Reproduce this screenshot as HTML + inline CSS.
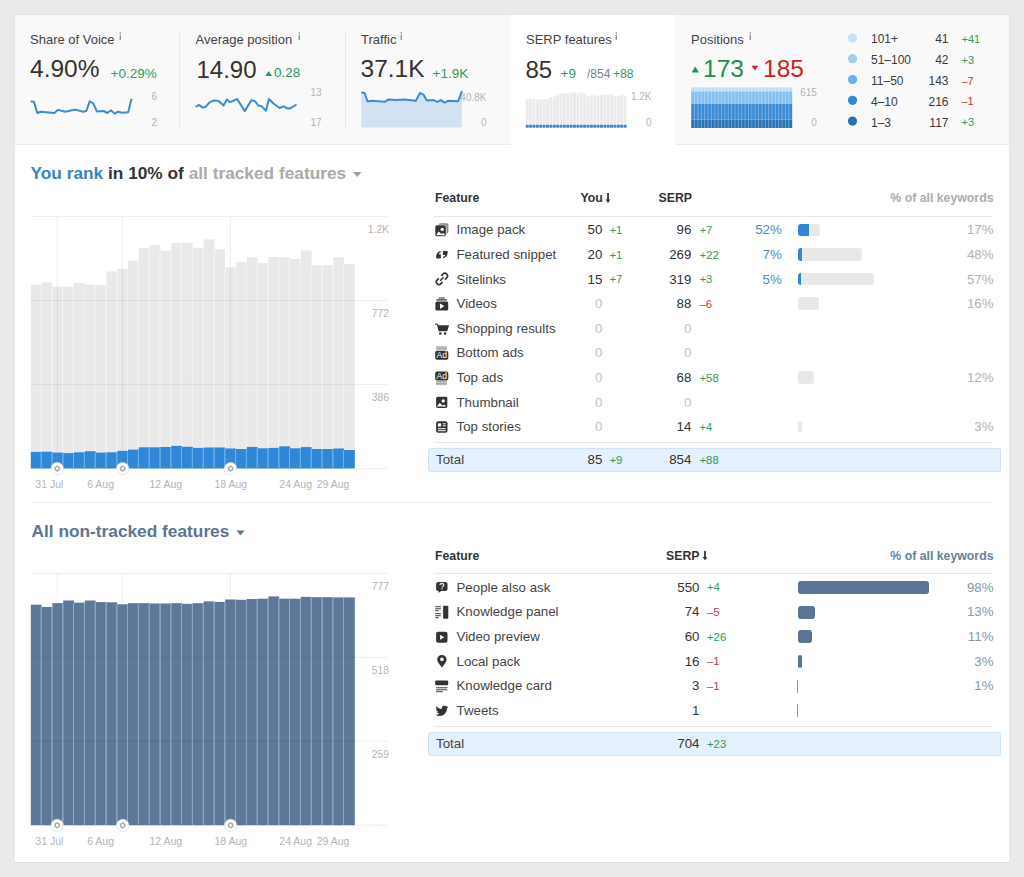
<!DOCTYPE html>
<html><head><meta charset="utf-8"><style>
html,body{margin:0;padding:0;}
body{width:1024px;height:877px;background:#e9eaec;position:relative;overflow:hidden;font-family:"Liberation Sans", sans-serif;}
.t{position:absolute;white-space:nowrap;line-height:1;font-family:"Liberation Sans", sans-serif;}
svg{overflow:visible}
</style></head><body>
<div style="position:absolute;left:15.00px;top:15.00px;width:994.00px;height:130.00px;background:#f9f9f9;box-shadow:0 0 0 1px #e4e5e7;"></div>
<div style="position:absolute;left:511.00px;top:15.00px;width:164.00px;height:131.00px;background:#ffffff;"></div>
<div style="position:absolute;left:15.00px;top:144.00px;width:496.00px;height:1.00px;background:#ececec;"></div>
<div style="position:absolute;left:675.00px;top:144.00px;width:334.00px;height:1.00px;background:#ececec;"></div>
<div style="position:absolute;left:179.00px;top:31.00px;width:1.00px;height:98.00px;background:#e9e9e9;"></div>
<div style="position:absolute;left:345.00px;top:31.00px;width:1.00px;height:98.00px;background:#e9e9e9;"></div>
<div class="t" style="left:30.00px;top:33.00px;font-size:13px;color:#444;font-weight:400;">Share of Voice</div>
<svg style="position:absolute;left:119.30px;top:32.00px" width="3" height="9" viewBox="0 0 3 9"><circle cx="1.3" cy="1" r="0.85" fill="#8a8a8a"/><rect x="0.6" y="2.8" width="1.35" height="5.1" fill="#8a8a8a"/></svg>
<div class="t" style="left:30.00px;top:57.26px;font-size:24.5px;color:#333;font-weight:400;">4.90%</div>
<div class="t" style="left:110.50px;top:66.57px;font-size:13.5px;color:#2f9a5c;font-weight:400;">+0.29%</div>
<svg style="position:absolute;left:25px;top:90px" width="115" height="30" viewBox="25 90 115 30"><polyline fill="none" stroke="#3f8bd0" stroke-width="2" stroke-linejoin="round" points="30.7,101.4 33.9,101.7 37.3,113 40.7,111.7 54.4,113 57.8,109.9 65.3,111.7 75.6,109.6 83.1,111.7 86.3,111 89.7,101.4 93.4,103.5 96.8,111.4 103.6,111 107.4,113 110.9,110.3 114.6,113.7 118,111.7 122.1,112.8 128.2,112.3 131.6,98.7"/></svg>
<div class="t" style="right:867.00px;top:92.48px;font-size:10px;color:#b4b4b4;font-weight:400;">6</div>
<div class="t" style="right:867.00px;top:117.58px;font-size:10px;color:#b4b4b4;font-weight:400;">2</div>
<div class="t" style="left:195.50px;top:33.00px;font-size:13px;color:#444;font-weight:400;">Average position</div>
<svg style="position:absolute;left:298.00px;top:32.00px" width="3" height="9" viewBox="0 0 3 9"><circle cx="1.3" cy="1" r="0.85" fill="#8a8a8a"/><rect x="0.6" y="2.8" width="1.35" height="5.1" fill="#8a8a8a"/></svg>
<div class="t" style="left:196.50px;top:57.68px;font-size:24px;color:#333;font-weight:400;">14.90</div>
<svg style="position:absolute;left:260px;top:60px" width="20" height="20" viewBox="260 60 20 20"><polygon fill="#2f9a5c" points="265.3,75.9 272.1,75.9 268.7,71"/></svg>
<div class="t" style="left:274.00px;top:66.17px;font-size:13.5px;color:#2f9a5c;font-weight:400;">0.28</div>
<svg style="position:absolute;left:190px;top:90px" width="115" height="30" viewBox="190 90 115 30"><polyline fill="none" stroke="#3f8bd0" stroke-width="2" stroke-linejoin="round" points="195.7,107 198.9,104.9 203,107.6 205.7,106.7 209.8,102.2 213.9,100.5 218.7,101.1 223.5,105.6 226.9,99.4 230.3,102.2 237.2,99 244.7,111.1 251.5,100.1 254.9,101.2 258.4,105.6 261.8,106.3 265.9,110.8 269,99 273.4,103.5 279.6,108 283.7,106.3 287.1,108.3 289.8,108.6 296.6,104.5"/></svg>
<div class="t" style="right:702.50px;top:88.18px;font-size:10px;color:#b4b4b4;font-weight:400;">13</div>
<div class="t" style="right:702.50px;top:117.88px;font-size:10px;color:#b4b4b4;font-weight:400;">17</div>
<div class="t" style="left:361.00px;top:33.00px;font-size:13px;color:#444;font-weight:400;">Traffic</div>
<svg style="position:absolute;left:400.00px;top:32.00px" width="3" height="9" viewBox="0 0 3 9"><circle cx="1.3" cy="1" r="0.85" fill="#8a8a8a"/><rect x="0.6" y="2.8" width="1.35" height="5.1" fill="#8a8a8a"/></svg>
<div class="t" style="left:360.50px;top:57.26px;font-size:24.5px;color:#333;font-weight:400;">37.1K</div>
<div class="t" style="left:432.50px;top:66.57px;font-size:13.5px;color:#2f9a5c;font-weight:400;">+1.9K</div>
<svg style="position:absolute;left:355px;top:85px" width="115" height="45" viewBox="355 85 115 45"><polygon fill="#d3e2f3" points="361.2,127.5 361.2,92.6 364.6,93 367.6,101.5 371.4,100.8 385.1,101.8 388.5,99.4 395.3,100.1 404.2,99.4 415.8,100.8 420,93 423.4,94.6 426.8,100.4 433.6,100.1 437.4,101.8 440.9,100.1 444.6,102.6 448,100.8 458.2,101.2 461.9,91.2 461.9,127.5"/><polyline fill="none" stroke="#3f8bd0" stroke-width="2" stroke-linejoin="round" points="361.2,92.6 364.6,93 367.6,101.5 371.4,100.8 385.1,101.8 388.5,99.4 395.3,100.1 404.2,99.4 415.8,100.8 420,93 423.4,94.6 426.8,100.4 433.6,100.1 437.4,101.8 440.9,100.1 444.6,102.6 448,100.8 458.2,101.2 461.9,91.2"/></svg>
<div class="t" style="right:537.50px;top:92.58px;font-size:10px;color:#b4b4b4;font-weight:400;">40.8K</div>
<div class="t" style="right:537.50px;top:117.88px;font-size:10px;color:#b4b4b4;font-weight:400;">0</div>
<div class="t" style="left:526.00px;top:33.00px;font-size:13px;color:#444;font-weight:400;">SERP features</div>
<svg style="position:absolute;left:615.00px;top:32.00px" width="3" height="9" viewBox="0 0 3 9"><circle cx="1.3" cy="1" r="0.85" fill="#8a8a8a"/><rect x="0.6" y="2.8" width="1.35" height="5.1" fill="#8a8a8a"/></svg>
<div class="t" style="left:525.50px;top:57.68px;font-size:24px;color:#333;font-weight:400;">85</div>
<div class="t" style="left:560.50px;top:66.57px;font-size:13.5px;color:#2f9a5c;font-weight:400;">+9</div>
<div class="t" style="left:587.00px;top:67.84px;font-size:12px;color:#808080;font-weight:400;">/854</div>
<div class="t" style="left:613.00px;top:67.84px;font-size:12px;color:#2f9a5c;font-weight:400;">+88</div>
<svg style="position:absolute;left:520px;top:85px" width="115" height="45" viewBox="520 85 115 45"><rect x="525.80" y="99.00" width="2.92" height="25.80" fill="#ebebeb"/><rect x="525.80" y="124.8" width="2.92" height="2.9" fill="#3d82c8"/><rect x="529.17" y="98.67" width="2.92" height="26.13" fill="#ebebeb"/><rect x="529.17" y="124.8" width="2.92" height="2.9" fill="#3d82c8"/><rect x="532.55" y="99.32" width="2.92" height="25.48" fill="#ebebeb"/><rect x="532.55" y="124.8" width="2.92" height="2.9" fill="#3d82c8"/><rect x="535.92" y="99.32" width="2.92" height="25.48" fill="#ebebeb"/><rect x="535.92" y="124.8" width="2.92" height="2.9" fill="#3d82c8"/><rect x="539.29" y="98.75" width="2.92" height="26.05" fill="#ebebeb"/><rect x="539.29" y="124.8" width="2.92" height="2.9" fill="#3d82c8"/><rect x="542.67" y="99.00" width="2.92" height="25.80" fill="#ebebeb"/><rect x="542.67" y="124.8" width="2.92" height="2.9" fill="#3d82c8"/><rect x="546.04" y="99.06" width="2.92" height="25.74" fill="#ebebeb"/><rect x="546.04" y="124.8" width="2.92" height="2.9" fill="#3d82c8"/><rect x="549.41" y="96.97" width="2.92" height="27.83" fill="#ebebeb"/><rect x="549.41" y="124.8" width="2.92" height="2.9" fill="#3d82c8"/><rect x="552.79" y="96.58" width="2.92" height="28.22" fill="#ebebeb"/><rect x="552.79" y="124.8" width="2.92" height="2.9" fill="#3d82c8"/><rect x="556.16" y="95.31" width="2.92" height="29.49" fill="#ebebeb"/><rect x="556.16" y="124.8" width="2.92" height="2.9" fill="#3d82c8"/><rect x="559.53" y="93.34" width="2.92" height="31.46" fill="#ebebeb"/><rect x="559.53" y="124.8" width="2.92" height="2.9" fill="#3d82c8"/><rect x="562.91" y="92.89" width="2.92" height="31.91" fill="#ebebeb"/><rect x="562.91" y="124.8" width="2.92" height="2.9" fill="#3d82c8"/><rect x="566.28" y="93.77" width="2.92" height="31.03" fill="#ebebeb"/><rect x="566.28" y="124.8" width="2.92" height="2.9" fill="#3d82c8"/><rect x="569.65" y="92.56" width="2.92" height="32.24" fill="#ebebeb"/><rect x="569.65" y="124.8" width="2.92" height="2.9" fill="#3d82c8"/><rect x="573.03" y="92.50" width="2.92" height="32.30" fill="#ebebeb"/><rect x="573.03" y="124.8" width="2.92" height="2.9" fill="#3d82c8"/><rect x="576.40" y="93.28" width="2.92" height="31.52" fill="#ebebeb"/><rect x="576.40" y="124.8" width="2.92" height="2.9" fill="#3d82c8"/><rect x="579.77" y="91.99" width="2.92" height="32.81" fill="#ebebeb"/><rect x="579.77" y="124.8" width="2.92" height="2.9" fill="#3d82c8"/><rect x="583.15" y="93.52" width="2.92" height="31.28" fill="#ebebeb"/><rect x="583.15" y="124.8" width="2.92" height="2.9" fill="#3d82c8"/><rect x="586.52" y="96.33" width="2.92" height="28.47" fill="#ebebeb"/><rect x="586.52" y="124.8" width="2.92" height="2.9" fill="#3d82c8"/><rect x="589.89" y="95.49" width="2.92" height="29.31" fill="#ebebeb"/><rect x="589.89" y="124.8" width="2.92" height="2.9" fill="#3d82c8"/><rect x="593.27" y="94.80" width="2.92" height="30.00" fill="#ebebeb"/><rect x="593.27" y="124.8" width="2.92" height="2.9" fill="#3d82c8"/><rect x="596.64" y="95.69" width="2.92" height="29.11" fill="#ebebeb"/><rect x="596.64" y="124.8" width="2.92" height="2.9" fill="#3d82c8"/><rect x="600.01" y="94.73" width="2.92" height="30.07" fill="#ebebeb"/><rect x="600.01" y="124.8" width="2.92" height="2.9" fill="#3d82c8"/><rect x="603.39" y="94.80" width="2.92" height="30.00" fill="#ebebeb"/><rect x="603.39" y="124.8" width="2.92" height="2.9" fill="#3d82c8"/><rect x="606.76" y="95.04" width="2.92" height="29.76" fill="#ebebeb"/><rect x="606.76" y="124.8" width="2.92" height="2.9" fill="#3d82c8"/><rect x="610.13" y="93.71" width="2.92" height="31.09" fill="#ebebeb"/><rect x="610.13" y="124.8" width="2.92" height="2.9" fill="#3d82c8"/><rect x="613.51" y="96.00" width="2.92" height="28.80" fill="#ebebeb"/><rect x="613.51" y="124.8" width="2.92" height="2.9" fill="#3d82c8"/><rect x="616.88" y="96.00" width="2.92" height="28.80" fill="#ebebeb"/><rect x="616.88" y="124.8" width="2.92" height="2.9" fill="#3d82c8"/><rect x="620.25" y="94.80" width="2.92" height="30.00" fill="#ebebeb"/><rect x="620.25" y="124.8" width="2.92" height="2.9" fill="#3d82c8"/><rect x="623.63" y="95.82" width="2.92" height="28.98" fill="#ebebeb"/><rect x="623.63" y="124.8" width="2.92" height="2.9" fill="#3d82c8"/></svg>
<div class="t" style="right:372.50px;top:92.48px;font-size:10px;color:#b4b4b4;font-weight:400;">1.2K</div>
<div class="t" style="right:372.50px;top:117.88px;font-size:10px;color:#b4b4b4;font-weight:400;">0</div>
<div class="t" style="left:691.00px;top:33.00px;font-size:13px;color:#444;font-weight:400;">Positions</div>
<svg style="position:absolute;left:749.00px;top:32.00px" width="3" height="9" viewBox="0 0 3 9"><circle cx="1.3" cy="1" r="0.85" fill="#8a8a8a"/><rect x="0.6" y="2.8" width="1.35" height="5.1" fill="#8a8a8a"/></svg>
<svg style="position:absolute;left:685px;top:60px" width="80" height="20" viewBox="685 60 80 20"><polygon fill="#1f9450" points="691.6,72.6 698.9,72.6 695.25,66.5"/><polygon fill="#d0211c" points="751.6,65.7 758.2,65.7 754.9,70.6"/></svg>
<div class="t" style="left:703.00px;top:57.06px;font-size:24.5px;color:#1c8e4b;font-weight:400;">173</div>
<div class="t" style="left:763.00px;top:57.06px;font-size:24.5px;color:#cc1f1f;font-weight:400;">185</div>
<svg style="position:absolute;left:685px;top:80px" width="115" height="55" viewBox="685 80 115 55"><rect x="691.2" y="87.4" width="101" height="4" fill="#bfdef5"/><rect x="691.2" y="91.4" width="101" height="12.3" fill="#84c0ee"/><rect x="691.2" y="103.7" width="101" height="15.9" fill="#3b8ad6"/><rect x="691.2" y="119.6" width="101" height="8.4" fill="#2c75b3"/><rect x="694.12" y="87.4" width="0.9" height="40.6" fill="#fff" opacity="0.35"/><rect x="697.48" y="87.4" width="0.9" height="40.6" fill="#fff" opacity="0.35"/><rect x="700.85" y="87.4" width="0.9" height="40.6" fill="#fff" opacity="0.35"/><rect x="704.22" y="87.4" width="0.9" height="40.6" fill="#fff" opacity="0.35"/><rect x="707.58" y="87.4" width="0.9" height="40.6" fill="#fff" opacity="0.35"/><rect x="710.95" y="87.4" width="0.9" height="40.6" fill="#fff" opacity="0.35"/><rect x="714.32" y="87.4" width="0.9" height="40.6" fill="#fff" opacity="0.35"/><rect x="717.68" y="87.4" width="0.9" height="40.6" fill="#fff" opacity="0.35"/><rect x="721.05" y="87.4" width="0.9" height="40.6" fill="#fff" opacity="0.35"/><rect x="724.42" y="87.4" width="0.9" height="40.6" fill="#fff" opacity="0.35"/><rect x="727.78" y="87.4" width="0.9" height="40.6" fill="#fff" opacity="0.35"/><rect x="731.15" y="87.4" width="0.9" height="40.6" fill="#fff" opacity="0.35"/><rect x="734.52" y="87.4" width="0.9" height="40.6" fill="#fff" opacity="0.35"/><rect x="737.88" y="87.4" width="0.9" height="40.6" fill="#fff" opacity="0.35"/><rect x="741.25" y="87.4" width="0.9" height="40.6" fill="#fff" opacity="0.35"/><rect x="744.62" y="87.4" width="0.9" height="40.6" fill="#fff" opacity="0.35"/><rect x="747.98" y="87.4" width="0.9" height="40.6" fill="#fff" opacity="0.35"/><rect x="751.35" y="87.4" width="0.9" height="40.6" fill="#fff" opacity="0.35"/><rect x="754.72" y="87.4" width="0.9" height="40.6" fill="#fff" opacity="0.35"/><rect x="758.08" y="87.4" width="0.9" height="40.6" fill="#fff" opacity="0.35"/><rect x="761.45" y="87.4" width="0.9" height="40.6" fill="#fff" opacity="0.35"/><rect x="764.82" y="87.4" width="0.9" height="40.6" fill="#fff" opacity="0.35"/><rect x="768.18" y="87.4" width="0.9" height="40.6" fill="#fff" opacity="0.35"/><rect x="771.55" y="87.4" width="0.9" height="40.6" fill="#fff" opacity="0.35"/><rect x="774.92" y="87.4" width="0.9" height="40.6" fill="#fff" opacity="0.35"/><rect x="778.28" y="87.4" width="0.9" height="40.6" fill="#fff" opacity="0.35"/><rect x="781.65" y="87.4" width="0.9" height="40.6" fill="#fff" opacity="0.35"/><rect x="785.02" y="87.4" width="0.9" height="40.6" fill="#fff" opacity="0.35"/><rect x="788.38" y="87.4" width="0.9" height="40.6" fill="#fff" opacity="0.35"/></svg>
<div class="t" style="right:207.20px;top:87.88px;font-size:10px;color:#b4b4b4;font-weight:400;">615</div>
<div class="t" style="right:207.20px;top:117.98px;font-size:10px;color:#b4b4b4;font-weight:400;">0</div>
<div class="t" style="left:871.00px;top:33.42px;font-size:12px;color:#3a3a3a;font-weight:400;">101+</div>
<div class="t" style="right:75.50px;top:33.42px;font-size:12px;color:#3a3a3a;font-weight:400;">41</div>
<div class="t" style="left:961.50px;top:33.90px;font-size:11px;color:#2f9a5c;font-weight:400;">+41</div>
<div class="t" style="left:871.00px;top:54.22px;font-size:12px;color:#3a3a3a;font-weight:400;">51–100</div>
<div class="t" style="right:75.50px;top:54.22px;font-size:12px;color:#3a3a3a;font-weight:400;">42</div>
<div class="t" style="left:961.50px;top:54.70px;font-size:11px;color:#2f9a5c;font-weight:400;">+3</div>
<div class="t" style="left:871.00px;top:75.02px;font-size:12px;color:#3a3a3a;font-weight:400;">11–50</div>
<div class="t" style="right:75.50px;top:75.02px;font-size:12px;color:#3a3a3a;font-weight:400;">143</div>
<div class="t" style="left:961.50px;top:75.50px;font-size:11px;color:#c23b36;font-weight:400;">–7</div>
<div class="t" style="left:871.00px;top:95.82px;font-size:12px;color:#3a3a3a;font-weight:400;">4–10</div>
<div class="t" style="right:75.50px;top:95.82px;font-size:12px;color:#3a3a3a;font-weight:400;">216</div>
<div class="t" style="left:961.50px;top:96.30px;font-size:11px;color:#c23b36;font-weight:400;">–1</div>
<div class="t" style="left:871.00px;top:116.62px;font-size:12px;color:#3a3a3a;font-weight:400;">1–3</div>
<div class="t" style="right:75.50px;top:116.62px;font-size:12px;color:#3a3a3a;font-weight:400;">117</div>
<div class="t" style="left:961.50px;top:117.10px;font-size:11px;color:#2f9a5c;font-weight:400;">+3</div>
<svg style="position:absolute;left:840px;top:25px" width="30" height="110" viewBox="840 25 30 110"><circle cx="852.5" cy="37.90" r="4.6" fill="#c6e1f6"/><circle cx="852.5" cy="58.70" r="4.6" fill="#a0cdf0"/><circle cx="852.5" cy="79.50" r="4.6" fill="#6aafe8"/><circle cx="852.5" cy="100.30" r="4.6" fill="#3386d8"/><circle cx="852.5" cy="121.10" r="4.6" fill="#2b6fac"/></svg>
<div style="position:absolute;left:15.00px;top:145.00px;width:994.00px;height:717.00px;background:#ffffff;box-shadow:0 1px 0 0 #dcdddf, 1px 0 0 0 #e6e7e9, -1px 0 0 0 #e6e7e9;"></div>
<div style="position:absolute;left:511.00px;top:144.00px;width:164.00px;height:2.00px;background:#ffffff;"></div>
<div class="t" style="left:30.5px;top:164.96px;font-size:17.3px;font-weight:700;color:#333"><span style="color:#3a82c6">You rank</span> in 10% of <span style="color:#aaa">all tracked features</span></div>
<svg style="position:absolute;left:345px;top:165px" width="20" height="20" viewBox="345 165 20 20"><polygon fill="#a0a0a0" points="353,172 361.5,172 357.25,177"/></svg>
<svg style="position:absolute;left:20px;top:211px" width="380" height="271" viewBox="20 211 380 271"><rect x="30.80" y="284.50" width="10.80" height="183.90" fill="#e9e9e9"/><rect x="41.60" y="282.40" width="10.80" height="186.00" fill="#e9e9e9"/><rect x="52.40" y="286.60" width="10.80" height="181.80" fill="#e9e9e9"/><rect x="63.20" y="286.60" width="10.80" height="181.80" fill="#e9e9e9"/><rect x="74.00" y="282.90" width="10.80" height="185.50" fill="#e9e9e9"/><rect x="84.80" y="284.50" width="10.80" height="183.90" fill="#e9e9e9"/><rect x="95.60" y="284.90" width="10.80" height="183.50" fill="#e9e9e9"/><rect x="106.40" y="271.40" width="10.80" height="197.00" fill="#e9e9e9"/><rect x="117.20" y="268.90" width="10.80" height="199.50" fill="#e9e9e9"/><rect x="128.00" y="260.70" width="10.80" height="207.70" fill="#e9e9e9"/><rect x="138.80" y="248.00" width="10.80" height="220.40" fill="#e9e9e9"/><rect x="149.60" y="245.10" width="10.80" height="223.30" fill="#e9e9e9"/><rect x="160.40" y="250.80" width="10.80" height="217.60" fill="#e9e9e9"/><rect x="171.20" y="243.00" width="10.80" height="225.40" fill="#e9e9e9"/><rect x="182.00" y="242.60" width="10.80" height="225.80" fill="#e9e9e9"/><rect x="192.80" y="247.60" width="10.80" height="220.80" fill="#e9e9e9"/><rect x="203.60" y="239.30" width="10.80" height="229.10" fill="#e9e9e9"/><rect x="214.40" y="249.20" width="10.80" height="219.20" fill="#e9e9e9"/><rect x="225.20" y="267.30" width="10.80" height="201.10" fill="#e9e9e9"/><rect x="236.00" y="261.90" width="10.80" height="206.50" fill="#e9e9e9"/><rect x="246.80" y="257.40" width="10.80" height="211.00" fill="#e9e9e9"/><rect x="257.60" y="263.20" width="10.80" height="205.20" fill="#e9e9e9"/><rect x="268.40" y="257.00" width="10.80" height="211.40" fill="#e9e9e9"/><rect x="279.20" y="257.40" width="10.80" height="211.00" fill="#e9e9e9"/><rect x="290.00" y="259.00" width="10.80" height="209.40" fill="#e9e9e9"/><rect x="300.80" y="250.40" width="10.80" height="218.00" fill="#e9e9e9"/><rect x="311.60" y="265.20" width="10.80" height="203.20" fill="#e9e9e9"/><rect x="322.40" y="265.20" width="10.80" height="203.20" fill="#e9e9e9"/><rect x="333.20" y="257.40" width="10.80" height="211.00" fill="#e9e9e9"/><rect x="344.00" y="264.00" width="10.80" height="204.40" fill="#e9e9e9"/><rect x="40.60" y="284.50" width="1" height="183.90" fill="#f3f3f3"/><rect x="51.40" y="286.60" width="1" height="181.80" fill="#f3f3f3"/><rect x="62.20" y="286.60" width="1" height="181.80" fill="#f3f3f3"/><rect x="73.00" y="286.60" width="1" height="181.80" fill="#f3f3f3"/><rect x="83.80" y="284.50" width="1" height="183.90" fill="#f3f3f3"/><rect x="94.60" y="284.90" width="1" height="183.50" fill="#f3f3f3"/><rect x="105.40" y="284.90" width="1" height="183.50" fill="#f3f3f3"/><rect x="116.20" y="271.40" width="1" height="197.00" fill="#f3f3f3"/><rect x="127.00" y="268.90" width="1" height="199.50" fill="#f3f3f3"/><rect x="137.80" y="260.70" width="1" height="207.70" fill="#f3f3f3"/><rect x="148.60" y="248.00" width="1" height="220.40" fill="#f3f3f3"/><rect x="159.40" y="250.80" width="1" height="217.60" fill="#f3f3f3"/><rect x="170.20" y="250.80" width="1" height="217.60" fill="#f3f3f3"/><rect x="181.00" y="243.00" width="1" height="225.40" fill="#f3f3f3"/><rect x="191.80" y="247.60" width="1" height="220.80" fill="#f3f3f3"/><rect x="202.60" y="247.60" width="1" height="220.80" fill="#f3f3f3"/><rect x="213.40" y="249.20" width="1" height="219.20" fill="#f3f3f3"/><rect x="224.20" y="267.30" width="1" height="201.10" fill="#f3f3f3"/><rect x="235.00" y="267.30" width="1" height="201.10" fill="#f3f3f3"/><rect x="245.80" y="261.90" width="1" height="206.50" fill="#f3f3f3"/><rect x="256.60" y="263.20" width="1" height="205.20" fill="#f3f3f3"/><rect x="267.40" y="263.20" width="1" height="205.20" fill="#f3f3f3"/><rect x="278.20" y="257.40" width="1" height="211.00" fill="#f3f3f3"/><rect x="289.00" y="259.00" width="1" height="209.40" fill="#f3f3f3"/><rect x="299.80" y="259.00" width="1" height="209.40" fill="#f3f3f3"/><rect x="310.60" y="265.20" width="1" height="203.20" fill="#f3f3f3"/><rect x="321.40" y="265.20" width="1" height="203.20" fill="#f3f3f3"/><rect x="332.20" y="265.20" width="1" height="203.20" fill="#f3f3f3"/><rect x="343.00" y="264.00" width="1" height="204.40" fill="#f3f3f3"/><rect x="56.80" y="216.40" width="1" height="252.00" fill="#000" opacity="0.07"/><rect x="122.10" y="216.40" width="1" height="252.00" fill="#000" opacity="0.07"/><rect x="230.10" y="216.40" width="1" height="252.00" fill="#000" opacity="0.07"/><rect x="30.80" y="451.90" width="10.80" height="16.50" fill="#3187d7"/><rect x="41.60" y="451.70" width="10.80" height="16.70" fill="#3187d7"/><rect x="52.40" y="452.60" width="10.80" height="15.80" fill="#3187d7"/><rect x="63.20" y="453.10" width="10.80" height="15.30" fill="#3187d7"/><rect x="74.00" y="452.30" width="10.80" height="16.10" fill="#3187d7"/><rect x="84.80" y="451.20" width="10.80" height="17.20" fill="#3187d7"/><rect x="95.60" y="452.60" width="10.80" height="15.80" fill="#3187d7"/><rect x="106.40" y="452.30" width="10.80" height="16.10" fill="#3187d7"/><rect x="117.20" y="450.90" width="10.80" height="17.50" fill="#3187d7"/><rect x="128.00" y="449.60" width="10.80" height="18.80" fill="#3187d7"/><rect x="138.80" y="447.30" width="10.80" height="21.10" fill="#3187d7"/><rect x="149.60" y="447.30" width="10.80" height="21.10" fill="#3187d7"/><rect x="160.40" y="447.00" width="10.80" height="21.40" fill="#3187d7"/><rect x="171.20" y="445.90" width="10.80" height="22.50" fill="#3187d7"/><rect x="182.00" y="446.80" width="10.80" height="21.60" fill="#3187d7"/><rect x="192.80" y="447.90" width="10.80" height="20.50" fill="#3187d7"/><rect x="203.60" y="447.50" width="10.80" height="20.90" fill="#3187d7"/><rect x="214.40" y="447.50" width="10.80" height="20.90" fill="#3187d7"/><rect x="225.20" y="448.50" width="10.80" height="19.90" fill="#3187d7"/><rect x="236.00" y="449.00" width="10.80" height="19.40" fill="#3187d7"/><rect x="246.80" y="446.90" width="10.80" height="21.50" fill="#3187d7"/><rect x="257.60" y="448.30" width="10.80" height="20.10" fill="#3187d7"/><rect x="268.40" y="447.90" width="10.80" height="20.50" fill="#3187d7"/><rect x="279.20" y="446.30" width="10.80" height="22.10" fill="#3187d7"/><rect x="290.00" y="448.30" width="10.80" height="20.10" fill="#3187d7"/><rect x="300.80" y="447.10" width="10.80" height="21.30" fill="#3187d7"/><rect x="311.60" y="449.00" width="10.80" height="19.40" fill="#3187d7"/><rect x="322.40" y="449.00" width="10.80" height="19.40" fill="#3187d7"/><rect x="333.20" y="448.50" width="10.80" height="19.90" fill="#3187d7"/><rect x="344.00" y="450.00" width="10.80" height="18.40" fill="#3187d7"/><rect x="40.60" y="451.90" width="1" height="16.50" fill="#6ab3ef"/><rect x="51.40" y="452.60" width="1" height="15.80" fill="#6ab3ef"/><rect x="62.20" y="453.10" width="1" height="15.30" fill="#6ab3ef"/><rect x="73.00" y="453.10" width="1" height="15.30" fill="#6ab3ef"/><rect x="83.80" y="452.30" width="1" height="16.10" fill="#6ab3ef"/><rect x="94.60" y="452.60" width="1" height="15.80" fill="#6ab3ef"/><rect x="105.40" y="452.60" width="1" height="15.80" fill="#6ab3ef"/><rect x="116.20" y="452.30" width="1" height="16.10" fill="#6ab3ef"/><rect x="127.00" y="450.90" width="1" height="17.50" fill="#6ab3ef"/><rect x="137.80" y="449.60" width="1" height="18.80" fill="#6ab3ef"/><rect x="148.60" y="447.30" width="1" height="21.10" fill="#6ab3ef"/><rect x="159.40" y="447.30" width="1" height="21.10" fill="#6ab3ef"/><rect x="170.20" y="447.00" width="1" height="21.40" fill="#6ab3ef"/><rect x="181.00" y="446.80" width="1" height="21.60" fill="#6ab3ef"/><rect x="191.80" y="447.90" width="1" height="20.50" fill="#6ab3ef"/><rect x="202.60" y="447.90" width="1" height="20.50" fill="#6ab3ef"/><rect x="213.40" y="447.50" width="1" height="20.90" fill="#6ab3ef"/><rect x="224.20" y="448.50" width="1" height="19.90" fill="#6ab3ef"/><rect x="235.00" y="449.00" width="1" height="19.40" fill="#6ab3ef"/><rect x="245.80" y="449.00" width="1" height="19.40" fill="#6ab3ef"/><rect x="256.60" y="448.30" width="1" height="20.10" fill="#6ab3ef"/><rect x="267.40" y="448.30" width="1" height="20.10" fill="#6ab3ef"/><rect x="278.20" y="447.90" width="1" height="20.50" fill="#6ab3ef"/><rect x="289.00" y="448.30" width="1" height="20.10" fill="#6ab3ef"/><rect x="299.80" y="448.30" width="1" height="20.10" fill="#6ab3ef"/><rect x="310.60" y="449.00" width="1" height="19.40" fill="#6ab3ef"/><rect x="321.40" y="449.00" width="1" height="19.40" fill="#6ab3ef"/><rect x="332.20" y="449.00" width="1" height="19.40" fill="#6ab3ef"/><rect x="343.00" y="450.00" width="1" height="18.40" fill="#6ab3ef"/><rect x="30.8" y="215.90" width="357.5" height="1" fill="#000" opacity="0.07"/><rect x="30.8" y="299.90" width="357.5" height="1" fill="#000" opacity="0.07"/><rect x="30.8" y="383.90" width="357.5" height="1" fill="#000" opacity="0.07"/><rect x="30.8" y="467.90" width="357.5" height="1" fill="#000" opacity="0.07"/><circle cx="57.2" cy="468.60" r="6.1" fill="#fff" stroke="#dedede" stroke-width="0.8"/><g transform="translate(57.2,468.60)"><circle r="2" fill="none" stroke="#a8a8a8" stroke-width="1.2"/><rect x="-0.65" y="-3.2" width="1.3" height="1.4" fill="#a8a8a8" transform="rotate(0)"/><rect x="-0.65" y="-3.2" width="1.3" height="1.4" fill="#a8a8a8" transform="rotate(60)"/><rect x="-0.65" y="-3.2" width="1.3" height="1.4" fill="#a8a8a8" transform="rotate(120)"/><rect x="-0.65" y="-3.2" width="1.3" height="1.4" fill="#a8a8a8" transform="rotate(180)"/><rect x="-0.65" y="-3.2" width="1.3" height="1.4" fill="#a8a8a8" transform="rotate(240)"/><rect x="-0.65" y="-3.2" width="1.3" height="1.4" fill="#a8a8a8" transform="rotate(300)"/></g><circle cx="122.7" cy="468.60" r="6.1" fill="#fff" stroke="#dedede" stroke-width="0.8"/><g transform="translate(122.7,468.60)"><circle r="2" fill="none" stroke="#a8a8a8" stroke-width="1.2"/><rect x="-0.65" y="-3.2" width="1.3" height="1.4" fill="#a8a8a8" transform="rotate(0)"/><rect x="-0.65" y="-3.2" width="1.3" height="1.4" fill="#a8a8a8" transform="rotate(60)"/><rect x="-0.65" y="-3.2" width="1.3" height="1.4" fill="#a8a8a8" transform="rotate(120)"/><rect x="-0.65" y="-3.2" width="1.3" height="1.4" fill="#a8a8a8" transform="rotate(180)"/><rect x="-0.65" y="-3.2" width="1.3" height="1.4" fill="#a8a8a8" transform="rotate(240)"/><rect x="-0.65" y="-3.2" width="1.3" height="1.4" fill="#a8a8a8" transform="rotate(300)"/></g><circle cx="230.6" cy="468.60" r="6.1" fill="#fff" stroke="#dedede" stroke-width="0.8"/><g transform="translate(230.6,468.60)"><circle r="2" fill="none" stroke="#a8a8a8" stroke-width="1.2"/><rect x="-0.65" y="-3.2" width="1.3" height="1.4" fill="#a8a8a8" transform="rotate(0)"/><rect x="-0.65" y="-3.2" width="1.3" height="1.4" fill="#a8a8a8" transform="rotate(60)"/><rect x="-0.65" y="-3.2" width="1.3" height="1.4" fill="#a8a8a8" transform="rotate(120)"/><rect x="-0.65" y="-3.2" width="1.3" height="1.4" fill="#a8a8a8" transform="rotate(180)"/><rect x="-0.65" y="-3.2" width="1.3" height="1.4" fill="#a8a8a8" transform="rotate(240)"/><rect x="-0.65" y="-3.2" width="1.3" height="1.4" fill="#a8a8a8" transform="rotate(300)"/></g></svg>
<div class="t" style="right:635.00px;top:224.74px;font-size:10.3px;color:#b4b4b4;font-weight:400;">1.2K</div>
<div class="t" style="right:635.00px;top:308.74px;font-size:10.3px;color:#b4b4b4;font-weight:400;">772</div>
<div class="t" style="right:635.00px;top:392.74px;font-size:10.3px;color:#b4b4b4;font-weight:400;">386</div>
<div class="t" style="left:35.30px;top:479.01px;font-size:10.5px;color:#b4b4b4;font-weight:400;">31 Jul</div>
<div class="t" style="left:87.20px;top:479.01px;font-size:10.5px;color:#b4b4b4;font-weight:400;">6 Aug</div>
<div class="t" style="left:149.50px;top:479.01px;font-size:10.5px;color:#b4b4b4;font-weight:400;">12 Aug</div>
<div class="t" style="left:214.50px;top:479.01px;font-size:10.5px;color:#b4b4b4;font-weight:400;">18 Aug</div>
<div class="t" style="left:279.30px;top:479.01px;font-size:10.5px;color:#b4b4b4;font-weight:400;">24 Aug</div>
<div class="t" style="left:316.70px;top:479.01px;font-size:10.5px;color:#b4b4b4;font-weight:400;">29 Aug</div>
<div class="t" style="left:435.00px;top:191.79px;font-size:12.3px;color:#333;font-weight:700;">Feature</div>
<div class="t" style="left:580.50px;top:191.79px;font-size:12.3px;color:#333;font-weight:700;">You</div>
<svg style="position:absolute;left:604.90px;top:192.80px" width="6" height="10.70" viewBox="0 0 6 10.70"><rect x="2.1" y="0" width="1.8" height="7.20" fill="#333"/><path d="M0.7 6.60 L5.3 6.60 L3 10.20 Z" fill="#333"/></svg>
<div class="t" style="left:658.50px;top:191.79px;font-size:12.3px;color:#333;font-weight:700;">SERP</div>
<div class="t" style="right:30.50px;top:191.79px;font-size:12.3px;color:#adadad;font-weight:700;">% of all keywords</div>
<div style="position:absolute;left:434.40px;top:216.00px;width:558.60px;height:1.00px;background:#e8e8e8;"></div>
<svg style="position:absolute;left:435.00px;top:223.00px;overflow:visible" width="14" height="15" viewBox="0 0 14 15"><rect x="3.4" y="0.2" width="10" height="10.5" rx="1.8" fill="#8a8a8a"/><rect x="-0.3" y="1.7" width="11.7" height="12.2" rx="2" fill="#fff"/><rect x="0.3" y="2.3" width="10.5" height="11" rx="1.6" fill="#333"/><circle cx="7.2" cy="6.4" r="1.7" fill="#fff"/><path d="M1.1 12.2 L3.6 8.4 L6.6 11 L8.4 10 L10.2 12.2 Z" fill="#fff"/></svg>
<div class="t" style="left:456.50px;top:223.24px;font-size:13.3px;color:#444;font-weight:400;">Image pack</div>
<div class="t" style="right:421.70px;top:223.24px;font-size:13.3px;color:#333;font-weight:400;">50</div>
<div class="t" style="left:609.50px;top:224.93px;font-size:11.3px;color:#2f9a5c;font-weight:400;">+1</div>
<div class="t" style="right:332.70px;top:223.24px;font-size:13.3px;color:#333;font-weight:400;">96</div>
<div class="t" style="left:699.50px;top:224.93px;font-size:11.3px;color:#2f9a5c;font-weight:400;">+7</div>
<div class="t" style="right:242.20px;top:223.24px;font-size:13.3px;color:#4a8ac6;font-weight:400;">52%</div>
<div style="position:absolute;left:797.50px;top:223.50px;width:22.78px;height:12.70px;background:#e8e8e8;border-radius:3px;"></div>
<div style="position:absolute;left:797.50px;top:223.50px;width:11.85px;height:12.70px;background:#3386d6;border-radius:3px 0 0 3px;"></div>
<div class="t" style="right:30.50px;top:223.24px;font-size:13.3px;color:#b2b2b2;font-weight:400;">17%</div>
<svg style="position:absolute;left:435.00px;top:247.63px;overflow:visible" width="14" height="15" viewBox="0 0 14 15"><path d="M1.1 9 Q1.1 4.5 5.6 3.1 L5.9 4.3 Q3.9 5 3.6 6.3 L5 6.3 Q5.9 6.3 5.9 7.2 L5.9 9.4 Q5.9 10.4 5 10.4 L2 10.4 Q1.1 10.4 1.1 9.4 Z" fill="#333"/><path d="M12.7 4.4 Q12.7 8.9 8.2 10.3 L7.9 9.1 Q9.9 8.4 10.2 7.1 L8.8 7.1 Q7.9 7.1 7.9 6.2 L7.9 4 Q7.9 3.1 8.8 3.1 L11.8 3.1 Q12.7 3.1 12.7 4 Z" fill="#333"/></svg>
<div class="t" style="left:456.50px;top:247.87px;font-size:13.3px;color:#444;font-weight:400;">Featured snippet</div>
<div class="t" style="right:421.70px;top:247.87px;font-size:13.3px;color:#333;font-weight:400;">20</div>
<div class="t" style="left:609.50px;top:249.56px;font-size:11.3px;color:#2f9a5c;font-weight:400;">+1</div>
<div class="t" style="right:332.70px;top:247.87px;font-size:13.3px;color:#333;font-weight:400;">269</div>
<div class="t" style="left:699.50px;top:249.56px;font-size:11.3px;color:#2f9a5c;font-weight:400;">+22</div>
<div class="t" style="right:242.20px;top:247.87px;font-size:13.3px;color:#4a8ac6;font-weight:400;">7%</div>
<div style="position:absolute;left:797.50px;top:248.13px;width:64.32px;height:12.70px;background:#e8e8e8;border-radius:3px;"></div>
<div style="position:absolute;left:797.50px;top:248.13px;width:4.50px;height:12.70px;background:#3386d6;border-radius:3px 0 0 3px;"></div>
<div class="t" style="right:30.50px;top:247.87px;font-size:13.3px;color:#b2b2b2;font-weight:400;">48%</div>
<svg style="position:absolute;left:435.00px;top:272.26px;overflow:visible" width="14" height="15" viewBox="0 0 14 15"><g fill="none" stroke="#333" stroke-width="1.6" stroke-linecap="butt"><path d="M6.3 3.9 L8.06 2.14 A2.6 2.6 0 0 1 11.74 5.82 L9.9 7.66"/><path d="M7.5 10.1 L5.74 11.86 A2.6 2.6 0 0 1 2.06 8.18 L3.9 6.34"/><path d="M5.2 8.7 L8.6 5.3"/></g></svg>
<div class="t" style="left:456.50px;top:272.50px;font-size:13.3px;color:#444;font-weight:400;">Sitelinks</div>
<div class="t" style="right:421.70px;top:272.50px;font-size:13.3px;color:#333;font-weight:400;">15</div>
<div class="t" style="left:609.50px;top:274.19px;font-size:11.3px;color:#2f9a5c;font-weight:400;">+7</div>
<div class="t" style="right:332.70px;top:272.50px;font-size:13.3px;color:#333;font-weight:400;">319</div>
<div class="t" style="left:699.50px;top:274.19px;font-size:11.3px;color:#2f9a5c;font-weight:400;">+3</div>
<div class="t" style="right:242.20px;top:272.50px;font-size:13.3px;color:#4a8ac6;font-weight:400;">5%</div>
<div style="position:absolute;left:797.50px;top:272.76px;width:76.38px;height:12.70px;background:#e8e8e8;border-radius:3px;"></div>
<div style="position:absolute;left:797.50px;top:272.76px;width:3.82px;height:12.70px;background:#3386d6;border-radius:3px 0 0 3px;"></div>
<div class="t" style="right:30.50px;top:272.50px;font-size:13.3px;color:#b2b2b2;font-weight:400;">57%</div>
<svg style="position:absolute;left:435.00px;top:296.89px;overflow:visible" width="14" height="15" viewBox="0 0 14 15"><rect x="3.4" y="0.45" width="6.6" height="1.1" rx="0.5" fill="#333"/><rect x="1.3" y="2.35" width="10.6" height="1.1" rx="0.5" fill="#333"/><rect x="0.4" y="4.4" width="12.8" height="9.1" rx="1.6" fill="#333"/><path d="M5 6.4 L9.3 8.9 L5 11.9 Z" fill="#fff"/></svg>
<div class="t" style="left:456.50px;top:297.13px;font-size:13.3px;color:#444;font-weight:400;">Videos</div>
<div class="t" style="right:421.70px;top:297.13px;font-size:13.3px;color:#c2c2c2;font-weight:400;">0</div>
<div class="t" style="right:332.70px;top:297.13px;font-size:13.3px;color:#333;font-weight:400;">88</div>
<div class="t" style="left:699.50px;top:298.82px;font-size:11.3px;color:#c23b36;font-weight:400;">–6</div>
<div style="position:absolute;left:797.50px;top:297.39px;width:21.44px;height:12.70px;background:#e8e8e8;border-radius:3px;"></div>
<div class="t" style="right:30.50px;top:297.13px;font-size:13.3px;color:#b2b2b2;font-weight:400;">16%</div>
<svg style="position:absolute;left:435.00px;top:321.52px;overflow:visible" width="14" height="15" viewBox="0 0 14 15"><path d="M0.2 2.1 L1.9 2.2 Q2.5 2.4 2.7 3.2 L4.1 8.7 L11.8 8.7 L13.2 3.9 L2.9 3.9" fill="none" stroke="#333" stroke-width="1.2"/><path d="M2.9 3.9 L13.2 3.9 L11.8 8.7 L4.1 8.7 Z" fill="#333"/><circle cx="5.3" cy="11.4" r="1.25" fill="#333"/><circle cx="10.1" cy="11.4" r="1.25" fill="#333"/></svg>
<div class="t" style="left:456.50px;top:321.76px;font-size:13.3px;color:#444;font-weight:400;">Shopping results</div>
<div class="t" style="right:421.70px;top:321.76px;font-size:13.3px;color:#c2c2c2;font-weight:400;">0</div>
<div class="t" style="right:332.70px;top:321.76px;font-size:13.3px;color:#c2c2c2;font-weight:400;">0</div>
<svg style="position:absolute;left:435.00px;top:346.15px;overflow:visible" width="14" height="15" viewBox="0 0 14 15"><rect x="1.1" y="0.3" width="10.9" height="3.8" fill="#a8a8a8"/><rect x="1.1" y="1.35" width="10.9" height="0.6" fill="#d0d0d0"/><rect x="1.1" y="3" width="10.9" height="0.6" fill="#d0d0d0"/><rect x="0.2" y="4.85" width="13.1" height="8.9" rx="1.8" fill="#333"/><text x="6.75" y="12.2" font-family="Liberation Sans" font-size="8.6" font-weight="400" fill="#fff" text-anchor="middle">Ad</text></svg>
<div class="t" style="left:456.50px;top:346.39px;font-size:13.3px;color:#444;font-weight:400;">Bottom ads</div>
<div class="t" style="right:421.70px;top:346.39px;font-size:13.3px;color:#c2c2c2;font-weight:400;">0</div>
<div class="t" style="right:332.70px;top:346.39px;font-size:13.3px;color:#c2c2c2;font-weight:400;">0</div>
<svg style="position:absolute;left:435.00px;top:370.78px;overflow:visible" width="14" height="15" viewBox="0 0 14 15"><rect x="0.2" y="0.6" width="13.1" height="8.9" rx="1.8" fill="#333"/><text x="6.75" y="7.95" font-family="Liberation Sans" font-size="8.6" font-weight="400" fill="#fff" text-anchor="middle">Ad</text><rect x="1.1" y="10.1" width="10.9" height="4" fill="#a8a8a8"/><rect x="1.1" y="11.3" width="10.9" height="0.6" fill="#d0d0d0"/><rect x="1.1" y="12.9" width="10.9" height="0.6" fill="#d0d0d0"/></svg>
<div class="t" style="left:456.50px;top:371.02px;font-size:13.3px;color:#444;font-weight:400;">Top ads</div>
<div class="t" style="right:421.70px;top:371.02px;font-size:13.3px;color:#c2c2c2;font-weight:400;">0</div>
<div class="t" style="right:332.70px;top:371.02px;font-size:13.3px;color:#333;font-weight:400;">68</div>
<div class="t" style="left:699.50px;top:372.71px;font-size:11.3px;color:#2f9a5c;font-weight:400;">+58</div>
<div style="position:absolute;left:797.50px;top:371.28px;width:16.08px;height:12.70px;background:#e8e8e8;border-radius:3px;"></div>
<div class="t" style="right:30.50px;top:371.02px;font-size:13.3px;color:#b2b2b2;font-weight:400;">12%</div>
<svg style="position:absolute;left:435.00px;top:395.41px;overflow:visible" width="14" height="15" viewBox="0 0 14 15"><rect x="1.1" y="1.7" width="11.2" height="11.2" rx="1.6" fill="#333"/><circle cx="8.2" cy="5.9" r="1.6" fill="#fff"/><path d="M2 11.6 L4.5 7.8 L7.5 10.6 L9.3 9.7 L11.3 11.6 Z" fill="#fff"/></svg>
<div class="t" style="left:456.50px;top:395.65px;font-size:13.3px;color:#444;font-weight:400;">Thumbnail</div>
<div class="t" style="right:421.70px;top:395.65px;font-size:13.3px;color:#c2c2c2;font-weight:400;">0</div>
<div class="t" style="right:332.70px;top:395.65px;font-size:13.3px;color:#c2c2c2;font-weight:400;">0</div>
<svg style="position:absolute;left:435.00px;top:420.04px;overflow:visible" width="14" height="15" viewBox="0 0 14 15"><rect x="1.1" y="1.26" width="11.4" height="11.6" rx="2" fill="#333"/><rect x="2.9" y="3.36" width="3.2" height="3.2" fill="#fff"/><rect x="7.7" y="3.3" width="3" height="1" fill="#fff"/><rect x="7.7" y="5.3" width="3" height="1" fill="#fff"/><rect x="2.9" y="8.2" width="7.8" height="1" fill="#fff"/><rect x="2.9" y="10.2" width="7.8" height="1" fill="#fff"/></svg>
<div class="t" style="left:456.50px;top:420.28px;font-size:13.3px;color:#444;font-weight:400;">Top stories</div>
<div class="t" style="right:421.70px;top:420.28px;font-size:13.3px;color:#c2c2c2;font-weight:400;">0</div>
<div class="t" style="right:332.70px;top:420.28px;font-size:13.3px;color:#333;font-weight:400;">14</div>
<div class="t" style="left:699.50px;top:421.97px;font-size:11.3px;color:#2f9a5c;font-weight:400;">+4</div>
<div style="position:absolute;left:797.50px;top:420.54px;width:4.02px;height:12.70px;background:#e8e8e8;border-radius:3px;"></div>
<div class="t" style="right:30.50px;top:420.28px;font-size:13.3px;color:#b2b2b2;font-weight:400;">3%</div>
<div style="position:absolute;left:434.40px;top:442.30px;width:558.60px;height:1.00px;background:#e8e8e8;"></div>
<div style="position:absolute;left:428.20px;top:447.50px;width:572.50px;height:24.00px;background:#e4f0fb;border:1px solid #d2e4f3;box-sizing:border-box;border-radius:2px;"></div>
<div class="t" style="left:436.00px;top:453.14px;font-size:13.3px;color:#444;font-weight:400;">Total</div>
<div class="t" style="right:421.70px;top:453.14px;font-size:13.3px;color:#333;font-weight:400;">85</div>
<div class="t" style="left:609.50px;top:454.83px;font-size:11.3px;color:#2f9a5c;font-weight:400;">+9</div>
<div class="t" style="right:332.70px;top:453.14px;font-size:13.3px;color:#333;font-weight:400;">854</div>
<div class="t" style="left:699.50px;top:454.83px;font-size:11.3px;color:#2f9a5c;font-weight:400;">+88</div>
<div style="position:absolute;left:30.50px;top:502.20px;width:962.50px;height:1.00px;background:#ececec;"></div>
<div class="t" style="left:31.50px;top:523.36px;font-size:17.3px;color:#5b7595;font-weight:700;">All non-tracked features</div>
<svg style="position:absolute;left:230px;top:520px" width="20" height="20" viewBox="230 520 20 20"><polygon fill="#5b7595" points="236.5,530.5 244.5,530.5 240.5,535.5"/></svg>
<svg style="position:absolute;left:20px;top:568px" width="380" height="271" viewBox="20 568 380 271"><rect x="56.80" y="573.40" width="1" height="251.80" fill="#000" opacity="0.07"/><rect x="122.10" y="573.40" width="1" height="251.80" fill="#000" opacity="0.07"/><rect x="230.10" y="573.40" width="1" height="251.80" fill="#000" opacity="0.07"/><rect x="30.80" y="604.70" width="10.80" height="220.50" fill="#5d7898"/><rect x="41.60" y="606.90" width="10.80" height="218.30" fill="#5d7898"/><rect x="52.40" y="603.10" width="10.80" height="222.10" fill="#5d7898"/><rect x="63.20" y="600.50" width="10.80" height="224.70" fill="#5d7898"/><rect x="74.00" y="602.70" width="10.80" height="222.50" fill="#5d7898"/><rect x="84.80" y="600.50" width="10.80" height="224.70" fill="#5d7898"/><rect x="95.60" y="602.10" width="10.80" height="223.10" fill="#5d7898"/><rect x="106.40" y="602.30" width="10.80" height="222.90" fill="#5d7898"/><rect x="117.20" y="604.30" width="10.80" height="220.90" fill="#5d7898"/><rect x="128.00" y="603.20" width="10.80" height="222.00" fill="#5d7898"/><rect x="138.80" y="603.20" width="10.80" height="222.00" fill="#5d7898"/><rect x="149.60" y="603.50" width="10.80" height="221.70" fill="#5d7898"/><rect x="160.40" y="603.50" width="10.80" height="221.70" fill="#5d7898"/><rect x="171.20" y="603.20" width="10.80" height="222.00" fill="#5d7898"/><rect x="182.00" y="603.80" width="10.80" height="221.40" fill="#5d7898"/><rect x="192.80" y="603.20" width="10.80" height="222.00" fill="#5d7898"/><rect x="203.60" y="601.40" width="10.80" height="223.80" fill="#5d7898"/><rect x="214.40" y="601.90" width="10.80" height="223.30" fill="#5d7898"/><rect x="225.20" y="599.50" width="10.80" height="225.70" fill="#5d7898"/><rect x="236.00" y="599.80" width="10.80" height="225.40" fill="#5d7898"/><rect x="246.80" y="599.00" width="10.80" height="226.20" fill="#5d7898"/><rect x="257.60" y="598.70" width="10.80" height="226.50" fill="#5d7898"/><rect x="268.40" y="596.40" width="10.80" height="228.80" fill="#5d7898"/><rect x="279.20" y="598.70" width="10.80" height="226.50" fill="#5d7898"/><rect x="290.00" y="598.70" width="10.80" height="226.50" fill="#5d7898"/><rect x="300.80" y="596.90" width="10.80" height="228.30" fill="#5d7898"/><rect x="311.60" y="597.20" width="10.80" height="228.00" fill="#5d7898"/><rect x="322.40" y="597.20" width="10.80" height="228.00" fill="#5d7898"/><rect x="333.20" y="597.40" width="10.80" height="227.80" fill="#5d7898"/><rect x="344.00" y="597.40" width="10.80" height="227.80" fill="#5d7898"/><rect x="40.60" y="606.90" width="1" height="218.30" fill="#93a8c2"/><rect x="51.40" y="606.90" width="1" height="218.30" fill="#93a8c2"/><rect x="62.20" y="603.10" width="1" height="222.10" fill="#93a8c2"/><rect x="73.00" y="602.70" width="1" height="222.50" fill="#93a8c2"/><rect x="83.80" y="602.70" width="1" height="222.50" fill="#93a8c2"/><rect x="94.60" y="602.10" width="1" height="223.10" fill="#93a8c2"/><rect x="105.40" y="602.30" width="1" height="222.90" fill="#93a8c2"/><rect x="116.20" y="604.30" width="1" height="220.90" fill="#93a8c2"/><rect x="127.00" y="604.30" width="1" height="220.90" fill="#93a8c2"/><rect x="137.80" y="603.20" width="1" height="222.00" fill="#93a8c2"/><rect x="148.60" y="603.50" width="1" height="221.70" fill="#93a8c2"/><rect x="159.40" y="603.50" width="1" height="221.70" fill="#93a8c2"/><rect x="170.20" y="603.50" width="1" height="221.70" fill="#93a8c2"/><rect x="181.00" y="603.80" width="1" height="221.40" fill="#93a8c2"/><rect x="191.80" y="603.80" width="1" height="221.40" fill="#93a8c2"/><rect x="202.60" y="603.20" width="1" height="222.00" fill="#93a8c2"/><rect x="213.40" y="601.90" width="1" height="223.30" fill="#93a8c2"/><rect x="224.20" y="601.90" width="1" height="223.30" fill="#93a8c2"/><rect x="235.00" y="599.80" width="1" height="225.40" fill="#93a8c2"/><rect x="245.80" y="599.80" width="1" height="225.40" fill="#93a8c2"/><rect x="256.60" y="599.00" width="1" height="226.20" fill="#93a8c2"/><rect x="267.40" y="598.70" width="1" height="226.50" fill="#93a8c2"/><rect x="278.20" y="598.70" width="1" height="226.50" fill="#93a8c2"/><rect x="289.00" y="598.70" width="1" height="226.50" fill="#93a8c2"/><rect x="299.80" y="598.70" width="1" height="226.50" fill="#93a8c2"/><rect x="310.60" y="597.20" width="1" height="228.00" fill="#93a8c2"/><rect x="321.40" y="597.20" width="1" height="228.00" fill="#93a8c2"/><rect x="332.20" y="597.40" width="1" height="227.80" fill="#93a8c2"/><rect x="343.00" y="597.40" width="1" height="227.80" fill="#93a8c2"/><rect x="30.8" y="572.90" width="357.5" height="1" fill="#000" opacity="0.07"/><rect x="30.8" y="656.83" width="357.5" height="1" fill="#000" opacity="0.07"/><rect x="30.8" y="740.77" width="357.5" height="1" fill="#000" opacity="0.07"/><rect x="30.8" y="824.70" width="357.5" height="1" fill="#000" opacity="0.07"/><circle cx="57.2" cy="825.40" r="6.1" fill="#fff" stroke="#dedede" stroke-width="0.8"/><g transform="translate(57.2,825.40)"><circle r="2" fill="none" stroke="#a8a8a8" stroke-width="1.2"/><rect x="-0.65" y="-3.2" width="1.3" height="1.4" fill="#a8a8a8" transform="rotate(0)"/><rect x="-0.65" y="-3.2" width="1.3" height="1.4" fill="#a8a8a8" transform="rotate(60)"/><rect x="-0.65" y="-3.2" width="1.3" height="1.4" fill="#a8a8a8" transform="rotate(120)"/><rect x="-0.65" y="-3.2" width="1.3" height="1.4" fill="#a8a8a8" transform="rotate(180)"/><rect x="-0.65" y="-3.2" width="1.3" height="1.4" fill="#a8a8a8" transform="rotate(240)"/><rect x="-0.65" y="-3.2" width="1.3" height="1.4" fill="#a8a8a8" transform="rotate(300)"/></g><circle cx="122.7" cy="825.40" r="6.1" fill="#fff" stroke="#dedede" stroke-width="0.8"/><g transform="translate(122.7,825.40)"><circle r="2" fill="none" stroke="#a8a8a8" stroke-width="1.2"/><rect x="-0.65" y="-3.2" width="1.3" height="1.4" fill="#a8a8a8" transform="rotate(0)"/><rect x="-0.65" y="-3.2" width="1.3" height="1.4" fill="#a8a8a8" transform="rotate(60)"/><rect x="-0.65" y="-3.2" width="1.3" height="1.4" fill="#a8a8a8" transform="rotate(120)"/><rect x="-0.65" y="-3.2" width="1.3" height="1.4" fill="#a8a8a8" transform="rotate(180)"/><rect x="-0.65" y="-3.2" width="1.3" height="1.4" fill="#a8a8a8" transform="rotate(240)"/><rect x="-0.65" y="-3.2" width="1.3" height="1.4" fill="#a8a8a8" transform="rotate(300)"/></g><circle cx="230.6" cy="825.40" r="6.1" fill="#fff" stroke="#dedede" stroke-width="0.8"/><g transform="translate(230.6,825.40)"><circle r="2" fill="none" stroke="#a8a8a8" stroke-width="1.2"/><rect x="-0.65" y="-3.2" width="1.3" height="1.4" fill="#a8a8a8" transform="rotate(0)"/><rect x="-0.65" y="-3.2" width="1.3" height="1.4" fill="#a8a8a8" transform="rotate(60)"/><rect x="-0.65" y="-3.2" width="1.3" height="1.4" fill="#a8a8a8" transform="rotate(120)"/><rect x="-0.65" y="-3.2" width="1.3" height="1.4" fill="#a8a8a8" transform="rotate(180)"/><rect x="-0.65" y="-3.2" width="1.3" height="1.4" fill="#a8a8a8" transform="rotate(240)"/><rect x="-0.65" y="-3.2" width="1.3" height="1.4" fill="#a8a8a8" transform="rotate(300)"/></g></svg>
<div class="t" style="right:635.00px;top:581.74px;font-size:10.3px;color:#b4b4b4;font-weight:400;">777</div>
<div class="t" style="right:635.00px;top:665.67px;font-size:10.3px;color:#b4b4b4;font-weight:400;">518</div>
<div class="t" style="right:635.00px;top:749.60px;font-size:10.3px;color:#b4b4b4;font-weight:400;">259</div>
<div class="t" style="left:35.30px;top:836.11px;font-size:10.5px;color:#b4b4b4;font-weight:400;">31 Jul</div>
<div class="t" style="left:87.20px;top:836.11px;font-size:10.5px;color:#b4b4b4;font-weight:400;">6 Aug</div>
<div class="t" style="left:149.50px;top:836.11px;font-size:10.5px;color:#b4b4b4;font-weight:400;">12 Aug</div>
<div class="t" style="left:214.50px;top:836.11px;font-size:10.5px;color:#b4b4b4;font-weight:400;">18 Aug</div>
<div class="t" style="left:279.30px;top:836.11px;font-size:10.5px;color:#b4b4b4;font-weight:400;">24 Aug</div>
<div class="t" style="left:316.70px;top:836.11px;font-size:10.5px;color:#b4b4b4;font-weight:400;">29 Aug</div>
<div class="t" style="left:435.00px;top:549.59px;font-size:12.3px;color:#333;font-weight:700;">Feature</div>
<div class="t" style="left:666.00px;top:549.59px;font-size:12.3px;color:#333;font-weight:700;">SERP</div>
<svg style="position:absolute;left:701.50px;top:551.00px" width="6" height="10.10" viewBox="0 0 6 10.10"><rect x="2.1" y="0" width="1.8" height="6.60" fill="#333"/><path d="M0.7 6.00 L5.3 6.00 L3 9.60 Z" fill="#333"/></svg>
<div class="t" style="right:30.50px;top:549.59px;font-size:12.3px;color:#6781a0;font-weight:700;">% of all keywords</div>
<div style="position:absolute;left:434.40px;top:573.40px;width:558.60px;height:1.00px;background:#e8e8e8;"></div>
<svg style="position:absolute;left:435.00px;top:580.50px;overflow:visible" width="14" height="15" viewBox="0 0 14 15"><g transform="translate(0 -0.8)"><path d="M3.1 1.7 H10.5 Q12.5 1.7 12.5 3.7 V8.8 Q12.5 10.8 10.5 10.8 H6.2 L3.4 12.8 L3.8 10.8 H3.1 Q1.1 10.8 1.1 8.8 V3.7 Q1.1 1.7 3.1 1.7 Z" fill="#333"/><path d="M4.8 4.8 Q5.2 3.3 6.9 3.3 Q8.8 3.3 8.8 4.8 Q8.8 5.8 7.6 6.3 Q7 6.6 7 7.4" fill="none" stroke="#ddd" stroke-width="1.3"/><rect x="6.3" y="8.1" width="1.4" height="1.2" fill="#ddd"/></g></svg>
<div class="t" style="left:456.50px;top:580.74px;font-size:13.3px;color:#444;font-weight:400;">People also ask</div>
<div class="t" style="right:324.50px;top:580.74px;font-size:13.3px;color:#333;font-weight:400;">550</div>
<div class="t" style="left:707.00px;top:582.43px;font-size:11.3px;color:#2f9a5c;font-weight:400;">+4</div>
<div style="position:absolute;left:797.50px;top:581.00px;width:131.32px;height:13.00px;background:#5b7595;border-radius:3px;"></div>
<div class="t" style="right:30.50px;top:580.74px;font-size:13.3px;color:#8898ac;font-weight:400;">98%</div>
<svg style="position:absolute;left:435.00px;top:605.13px;overflow:visible" width="14" height="15" viewBox="0 0 14 15"><rect x="0.2" y="1.25" width="5.6" height="0.95" fill="#333"/><rect x="0.2" y="3.3" width="5.6" height="0.95" fill="#333"/><rect x="0.2" y="5.2" width="3.6" height="0.95" fill="#333"/><rect x="0.2" y="8.2" width="5.6" height="0.95" fill="#333"/><rect x="0.2" y="10.25" width="5.6" height="0.95" fill="#333"/><rect x="0.2" y="12.2" width="3.6" height="0.95" fill="#333"/><rect x="8.1" y="0.67" width="5.2" height="13" rx="0.8" fill="#333"/></svg>
<div class="t" style="left:456.50px;top:605.37px;font-size:13.3px;color:#444;font-weight:400;">Knowledge panel</div>
<div class="t" style="right:324.50px;top:605.37px;font-size:13.3px;color:#333;font-weight:400;">74</div>
<div class="t" style="left:707.00px;top:607.06px;font-size:11.3px;color:#c23b36;font-weight:400;">–5</div>
<div style="position:absolute;left:797.50px;top:605.63px;width:17.42px;height:13.00px;background:#5b7595;border-radius:3px;"></div>
<div class="t" style="right:30.50px;top:605.37px;font-size:13.3px;color:#8898ac;font-weight:400;">13%</div>
<svg style="position:absolute;left:435.00px;top:629.76px;overflow:visible" width="14" height="15" viewBox="0 0 14 15"><rect x="1.1" y="1.64" width="11.4" height="11" rx="2" fill="#333"/><path d="M5.1 4.84 L9.3 7.14 L5.1 9.84 Z" fill="#fff"/></svg>
<div class="t" style="left:456.50px;top:630.00px;font-size:13.3px;color:#444;font-weight:400;">Video preview</div>
<div class="t" style="right:324.50px;top:630.00px;font-size:13.3px;color:#333;font-weight:400;">60</div>
<div class="t" style="left:707.00px;top:631.69px;font-size:11.3px;color:#2f9a5c;font-weight:400;">+26</div>
<div style="position:absolute;left:797.50px;top:630.26px;width:14.74px;height:13.00px;background:#5b7595;border-radius:3px;"></div>
<div class="t" style="right:30.50px;top:630.00px;font-size:13.3px;color:#8898ac;font-weight:400;">11%</div>
<svg style="position:absolute;left:435.00px;top:654.39px;overflow:visible" width="14" height="15" viewBox="0 0 14 15"><path d="M6.9 0.9 A4.7 4.7 0 0 1 11.6 5.6 Q11.6 8.2 6.9 13.4 Q2.2 8.2 2.2 5.6 A4.7 4.7 0 0 1 6.9 0.9 Z" fill="#333"/><circle cx="6.9" cy="5.4" r="1.8" fill="#fff"/></svg>
<div class="t" style="left:456.50px;top:654.63px;font-size:13.3px;color:#444;font-weight:400;">Local pack</div>
<div class="t" style="right:324.50px;top:654.63px;font-size:13.3px;color:#333;font-weight:400;">16</div>
<div class="t" style="left:707.00px;top:656.32px;font-size:11.3px;color:#c23b36;font-weight:400;">–1</div>
<div style="position:absolute;left:797.50px;top:654.89px;width:4.02px;height:13.00px;background:#5b7595;border-radius:3px;"></div>
<div class="t" style="right:30.50px;top:654.63px;font-size:13.3px;color:#8898ac;font-weight:400;">3%</div>
<svg style="position:absolute;left:435.00px;top:679.02px;overflow:visible" width="14" height="15" viewBox="0 0 14 15"><rect x="0.2" y="1.38" width="13" height="4.8" rx="1.2" fill="#333"/><rect x="1.1" y="8.3" width="11.2" height="0.95" fill="#333"/><rect x="1.1" y="10.3" width="11.2" height="0.95" fill="#333"/><rect x="1.1" y="12.2" width="6.6" height="0.95" fill="#333"/></svg>
<div class="t" style="left:456.50px;top:679.26px;font-size:13.3px;color:#444;font-weight:400;">Knowledge card</div>
<div class="t" style="right:324.50px;top:679.26px;font-size:13.3px;color:#333;font-weight:400;">3</div>
<div class="t" style="left:707.00px;top:680.95px;font-size:11.3px;color:#c23b36;font-weight:400;">–1</div>
<div style="position:absolute;left:797.20px;top:679.52px;width:1.20px;height:13.00px;background:#8a9bb0;"></div>
<div class="t" style="right:30.50px;top:679.26px;font-size:13.3px;color:#8898ac;font-weight:400;">1%</div>
<svg style="position:absolute;left:435.00px;top:703.65px;overflow:visible" width="14" height="15" viewBox="0 0 14 15"><g transform="translate(0.6 0.45) scale(0.53)"><path fill="#333" d="M23.953 4.57a10 10 0 01-2.825.775 4.958 4.958 0 002.163-2.723c-.951.555-2.005.959-3.127 1.184a4.92 4.92 0 00-8.384 4.482C7.69 8.095 4.067 6.13 1.64 3.162a4.822 4.822 0 00-.666 2.475c0 1.71.87 3.213 2.188 4.096a4.904 4.904 0 01-2.228-.616v.06a4.923 4.923 0 003.946 4.827 4.996 4.996 0 01-2.212.085 4.936 4.936 0 004.604 3.417 9.867 9.867 0 01-6.102 2.105c-.39 0-.779-.023-1.17-.067a13.995 13.995 0 007.557 2.209c9.053 0 13.998-7.496 13.998-13.985 0-.21 0-.42-.015-.63A9.935 9.935 0 0024 4.59z"/></g></svg>
<div class="t" style="left:456.50px;top:703.89px;font-size:13.3px;color:#444;font-weight:400;">Tweets</div>
<div class="t" style="right:324.50px;top:703.89px;font-size:13.3px;color:#333;font-weight:400;">1</div>
<div style="position:absolute;left:797.20px;top:704.15px;width:1.20px;height:13.00px;background:#8a9bb0;"></div>
<div style="position:absolute;left:434.40px;top:726.00px;width:558.60px;height:1.00px;background:#e8e8e8;"></div>
<div style="position:absolute;left:428.20px;top:731.50px;width:572.50px;height:24.00px;background:#e4f0fb;border:1px solid #d2e4f3;box-sizing:border-box;border-radius:2px;"></div>
<div class="t" style="left:436.00px;top:737.34px;font-size:13.3px;color:#444;font-weight:400;">Total</div>
<div class="t" style="right:324.50px;top:737.34px;font-size:13.3px;color:#333;font-weight:400;">704</div>
<div class="t" style="left:707.00px;top:739.03px;font-size:11.3px;color:#2f9a5c;font-weight:400;">+23</div>
</body></html>
